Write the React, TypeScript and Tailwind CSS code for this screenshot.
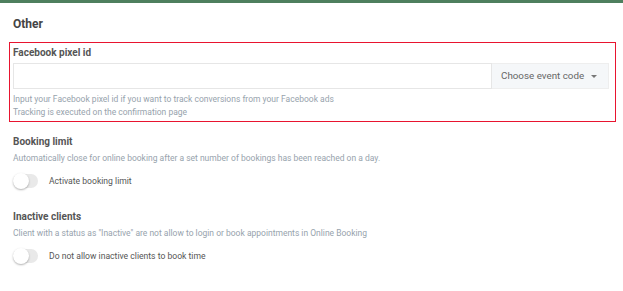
import React from "react";

function Toggle({ label }: { label: string }) {
  return (
    <div className="flex items-center mt-[9px]">
      <div className="relative w-[25px] h-[14px] rounded-full bg-[#e9e9e9]">
        <div className="absolute left-0 top-[-1px] w-[16px] h-[16px] rounded-full bg-white shadow-[0_1px_2px_rgba(0,0,0,0.3)]" />
      </div>
      <span className="ml-[11px] text-[8.6px] text-[#555]">{label}</span>
    </div>
  );
}

export default function App() {
  return (
    <div className="w-[623px] h-[291px] bg-white overflow-hidden" style={{ fontFamily: "Roboto, 'Liberation Sans', sans-serif" }}>
      <div className="h-[3px] bg-[#4e7f5e]" />
      <div className="pl-[9px] pr-[7px]">
        <div className="pl-[4px] pt-[13px] text-[12px] font-bold text-[#444] leading-[16px]">Other</div>
        <div className="mt-[10px] border border-[#e8142f] pl-[3px] pr-[6px] pt-[3px] pb-[2px]">
          <div className="text-[10px] font-bold text-[#555] leading-[14px]">Facebook pixel id</div>
          <div className="mt-[3px] flex h-[26px]">
            <div className="flex-1 border border-[#e6e6e6] bg-white" />
            <div className="w-[117px] flex items-center justify-between border border-l-0 border-[#eeeeee] bg-[#f5f7f9] pl-[9px] pr-[11px] text-[9.8px] text-[#666] whitespace-nowrap">
              <span>Choose event code</span>
              <svg width="6" height="3" viewBox="0 0 6 3"><path d="M0 0h6L3 3z" fill="#777" /></svg>
            </div>
          </div>
          <div className="mt-[4px] text-[8.5px] leading-[13px] text-[#97a3ad]">
            <div>Input your Facebook pixel id if you want to track conversions from your Facebook ads</div>
            <div>Tracking is executed on the confirmation page</div>
          </div>
        </div>
        <div className="pl-[4px]">
          <div className="mt-[13px] text-[10px] font-bold text-[#555] leading-[14px]">Booking limit</div>
          <div className="mt-[3px] text-[8.5px] leading-[13px] text-[#97a3ad]">Automatically close for online booking after a set number of bookings has been reached on a day.</div>
          <Toggle label="Activate booking limit" />
          <div className="mt-[22px] text-[10px] font-bold text-[#555] leading-[14px]">Inactive clients</div>
          <div className="mt-[3px] text-[8.5px] leading-[13px] text-[#97a3ad]">Client with a status as "Inactive" are not allow to login or book appointments in Online Booking</div>
          <Toggle label="Do not allow inactive clients to book time" />
        </div>
      </div>
    </div>
  );
}
